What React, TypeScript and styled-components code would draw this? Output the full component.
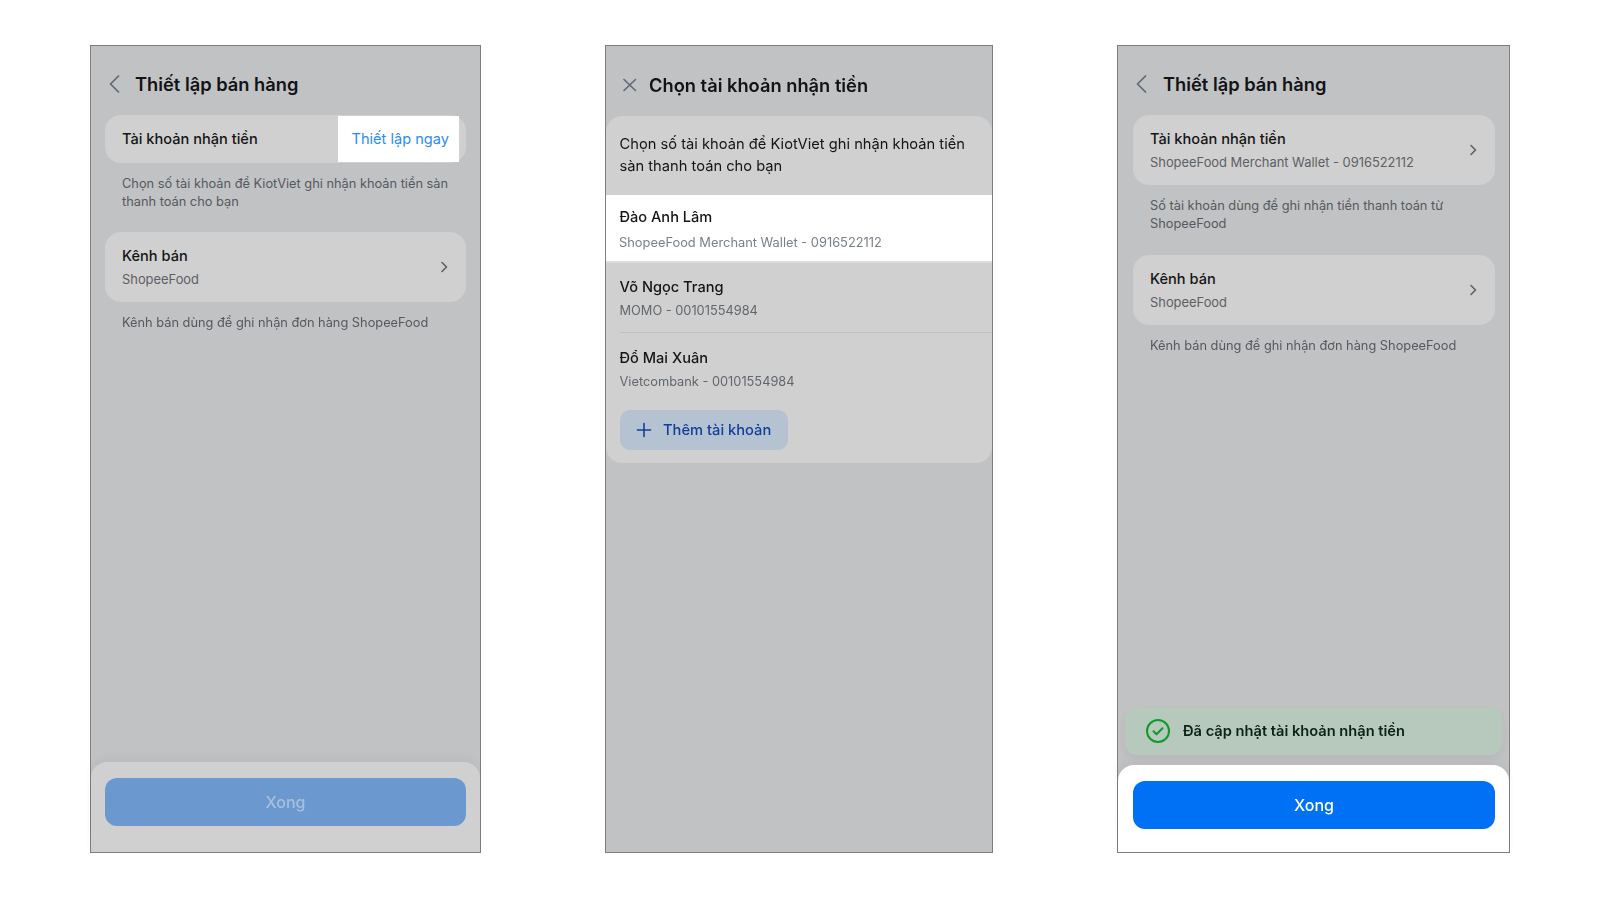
import React from "react";
import styled, { createGlobalStyle } from "styled-components";

const Global = createGlobalStyle`
  html, body { margin: 0; padding: 0; background: #fff; }
  body { font-family: Inter, "Liberation Sans", sans-serif; color: #141516; }
`;

const Page = styled.div`
  width: 1600px;
  height: 900px;
  padding: 45px 0 0 90px;
  box-sizing: border-box;
  display: flex;
  align-items: flex-start;
  overflow: hidden;
  filter: blur(0.35px);
`;

const Phone = styled.section<{ $w: number; $gap: number }>`
  width: ${(p) => p.$w}px;
  height: 808px;
  margin-right: ${(p) => p.$gap}px;
  box-sizing: border-box;
  flex: none;
  display: flex;
  flex-direction: column;
  background: #c1c2c4;
  border: 1px solid #7d7e80;
`;

const Header = styled.header<{ $pad: number; $gap: number; $h: number; $top: number }>`
  height: ${(p) => p.$h}px;
  flex: none;
  box-sizing: border-box;
  display: flex;
  align-items: center;
  gap: ${(p) => p.$gap}px;
  padding: ${(p) => p.$top}px 0 0 ${(p) => p.$pad}px;
`;

const Title = styled.h1`
  margin: 0;
  font-size: 18.3px;
  line-height: 24px;
  font-weight: 600;
  color: #121314;
`;

const Body = styled.div<{ $left: number }>`
  flex: 1;
  display: flex;
  flex-direction: column;
  padding: 0 14px 0 ${(p) => p.$left}px;
`;

const Card = styled.div<{ $h: number }>`
  height: ${(p) => p.$h}px;
  box-sizing: border-box;
  flex: none;
  display: flex;
  align-items: center;
  justify-content: space-between;
  padding: 0 17px;
  border-radius: 16px;
  background: #d0d0d0;
`;

const CardText = styled.div`
  display: flex;
  flex-direction: column;
  gap: 6px;
  padding-top: 2px;
`;

const CardTitle = styled.div`
  font-size: 14.6px;
  line-height: 18px;
  font-weight: 500;
  color: #141516;
`;

const CardSub = styled.div`
  font-size: 12.9px;
  line-height: 18px;
  color: #5d6165;
`;

const Help = styled.p<{ $after: number }>`
  margin: 12px 0 ${(p) => p.$after}px;
  padding: 0 15px 0 17px;
  font-size: 12.8px;
  line-height: 18px;
  color: #55595e;
`;

const ActionHighlight = styled.div`
  align-self: center;
  height: 46px;
  width: 121px;
  margin-right: -10px;
  padding-right: 10px;
  box-sizing: border-box;
  display: flex;
  align-items: center;
  justify-content: flex-end;
  background: #fff;
  color: #2b8cf5;
  font-size: 14.6px;
  white-space: nowrap;
`;

const Chevron = styled.svg`
  width: 12px;
  height: 12px;
  flex: none;
  color: #5c6167;
`;

const Footer = styled.footer<{ $light: boolean; $h: number; $left: number }>`
  flex: none;
  height: ${(p) => p.$h}px;
  box-sizing: border-box;
  padding: 16px 14px 0 ${(p) => p.$left}px;
  border-radius: 16px 16px 0 0;
  background: ${(p) => (p.$light ? "#fff" : "#d0d0d0")};
  box-shadow: 0 -4px 10px rgba(0, 0, 0, 0.04);
`;

const Done = styled.button<{ $active: boolean }>`
  width: 100%;
  height: 48px;
  border: 0;
  border-radius: 12px;
  font-family: inherit;
  font-size: 16px;
  font-weight: 500;
  background: ${(p) => (p.$active ? "#0070f4" : "#6a98cf")};
  color: ${(p) => (p.$active ? "#fff" : "#a9bfdb")};
`;

const Sheet = styled.div`
  flex: none;
  border-radius: 16px;
  background: #d0d0d0;
  overflow: hidden;
`;

const SheetIntro = styled.p`
  margin: 0;
  height: 79px;
  box-sizing: border-box;
  padding: 17px 13.5px 0;
  font-size: 14.7px;
  line-height: 22px;
  color: #141516;
`;

const Account = styled.div<{ $selected?: boolean; $divider?: boolean; $h: number; $top: number }>`
  height: ${(p) => p.$h}px;
  box-sizing: border-box;
  padding-top: ${(p) => p.$top}px;
  margin-left: ${(p) => (p.$divider ? "13.5px" : "0")};
  padding-left: ${(p) => (p.$divider ? "0" : "13.5px")};
  background: ${(p) => (p.$selected ? "#fff" : "transparent")};
  border-bottom: ${(p) => (p.$selected ? "2px solid #dcdcdc" : p.$divider ? "1px solid #bfc0c1" : "0")};
`;

const AccountName = styled.div`
  font-size: 14.6px;
  line-height: 20px;
  font-weight: 500;
  color: #141516;
`;

const AccountSub = styled.div<{ $selected?: boolean }>`
  margin: ${(p) => (p.$selected ? "7px 0 0 -0.5px" : "5px 0 0")};
  font-size: ${(p) => (p.$selected ? "12.85px" : "12.8px")};
  line-height: 18px;
  color: ${(p) => (p.$selected ? "#7a8088" : "#62676d")};
`;

const AddWrap = styled.div`
  padding: 7px 14px 13px;
`;

const AddButton = styled.div`
  width: 168px;
  height: 40px;
  display: flex;
  align-items: center;
  gap: 11px;
  padding-left: 16px;
  box-sizing: border-box;
  border-radius: 10px;
  background: #b5c2d1;
  color: #0f3f9c;
  font-size: 14.7px;
  font-weight: 500;
`;

const Toast = styled.div`
  flex: none;
  margin: auto -7px 10px -8px;
  height: 48px;
  box-sizing: border-box;
  display: flex;
  align-items: center;
  gap: 12px;
  padding-left: 20px;
  border-radius: 12px;
  background: #b6c9bc;
  box-shadow: 0 4px 8px rgba(0, 0, 0, 0.06);
  color: #0b2412;
  font-size: 14.65px;
  font-weight: 600;
`;

const Back = () => (
  <svg width="12" height="20" viewBox="0 0 12 20" fill="none" stroke="#5f6975" strokeWidth="1.7" strokeLinecap="round" strokeLinejoin="round">
    <path d="M9.5 2 1.5 10l8 8" />
  </svg>
);

const Close = () => (
  <svg width="16" height="16" viewBox="0 0 16 16" fill="none" stroke="#5f6975" strokeWidth="1.6" strokeLinecap="round">
    <path d="M2 2.5l11.5 11M13.5 2.5 2 13.5" />
  </svg>
);

const Next = () => (
  <Chevron viewBox="0 0 12 12" fill="none" stroke="currentColor" strokeWidth="1.6" strokeLinecap="round" strokeLinejoin="round">
    <path d="M5 1.5 9.5 6 5 10.5" />
  </Chevron>
);

const Plus = () => (
  <svg width="16" height="16" viewBox="0 0 16 16" fill="none" stroke="#0f3f9c" strokeWidth="1.6" strokeLinecap="round">
    <path d="M8 1.5v13M1.5 8h13" />
  </svg>
);

const Check = () => (
  <svg width="26" height="26" viewBox="0 0 26 26" fill="none" stroke="#0c9a2c" strokeWidth="2" strokeLinecap="round" strokeLinejoin="round">
    <circle cx="13" cy="13" r="11" />
    <path d="M8.5 13.3l3 3 6-6" />
  </svg>
);

export default function App() {
  return (
    <>
      <Global />
      <Page>
        <Phone $w={391} $gap={124}>
          <Header $h={69} $pad={18} $gap={14} $top={7}>
            <Back />
            <Title>Thiết lập bán hàng</Title>
          </Header>
          <Body $left={14}>
            <Card $h={48}>
              <CardTitle>Tài khoản nhận tiền</CardTitle>
              <ActionHighlight>Thiết lập ngay</ActionHighlight>
            </Card>
            <Help $after={21}>
              Chọn số tài khoản để KiotViet ghi nhận khoản tiền sàn thanh toán cho bạn
            </Help>
            <Card $h={70}>
              <CardText>
                <CardTitle>Kênh bán</CardTitle>
                <CardSub>ShopeeFood</CardSub>
              </CardText>
              <Next />
            </Card>
            <Help $after={0}>Kênh bán dùng để ghi nhận đơn hàng ShopeeFood</Help>
          </Body>
          <Footer $light={false} $h={90} $left={14}>
            <Done $active={false}>Xong</Done>
          </Footer>
        </Phone>

        <Phone $w={388} $gap={124}>
          <Header $h={70} $pad={16} $gap={11} $top={8}>
            <Close />
            <Title>Chọn tài khoản nhận tiền</Title>
          </Header>
          <Sheet>
            <SheetIntro>Chọn số tài khoản để KiotViet ghi nhận khoản tiền sàn thanh toán cho bạn</SheetIntro>
            <Account $selected $h={68} $top={12}>
              <AccountName>Đào Anh Lâm</AccountName>
              <AccountSub $selected>ShopeeFood Merchant Wallet - 0916522112</AccountSub>
            </Account>
            <Account $divider $h={70} $top={14}>
              <AccountName>Võ Ngọc Trang</AccountName>
              <AccountSub>MOMO - 00101554984</AccountSub>
            </Account>
            <Account $h={70} $top={15}>
              <AccountName>Đổ Mai Xuân</AccountName>
              <AccountSub>Vietcombank - 00101554984</AccountSub>
            </Account>
            <AddWrap>
              <AddButton>
                <Plus />
                Thêm tài khoản
              </AddButton>
            </AddWrap>
          </Sheet>
        </Phone>

        <Phone $w={393} $gap={0}>
          <Header $h={69} $pad={18} $gap={15} $top={7}>
            <Back />
            <Title>Thiết lập bán hàng</Title>
          </Header>
          <Body $left={15}>
            <Card $h={70}>
              <CardText>
                <CardTitle>Tài khoản nhận tiền</CardTitle>
                <CardSub>ShopeeFood Merchant Wallet - 0916522112</CardSub>
              </CardText>
              <Next />
            </Card>
            <Help $after={22}>Số tài khoản dùng để ghi nhận tiền thanh toán từ ShopeeFood</Help>
            <Card $h={70}>
              <CardText>
                <CardTitle>Kênh bán</CardTitle>
                <CardSub>ShopeeFood</CardSub>
              </CardText>
              <Next />
            </Card>
            <Help $after={0}>Kênh bán dùng để ghi nhận đơn hàng ShopeeFood</Help>
            <Toast>
              <Check />
              Đã cập nhật tài khoản nhận tiền
            </Toast>
          </Body>
          <Footer $light $h={87} $left={15}>
            <Done $active>Xong</Done>
          </Footer>
        </Phone>
      </Page>
    </>
  );
}
